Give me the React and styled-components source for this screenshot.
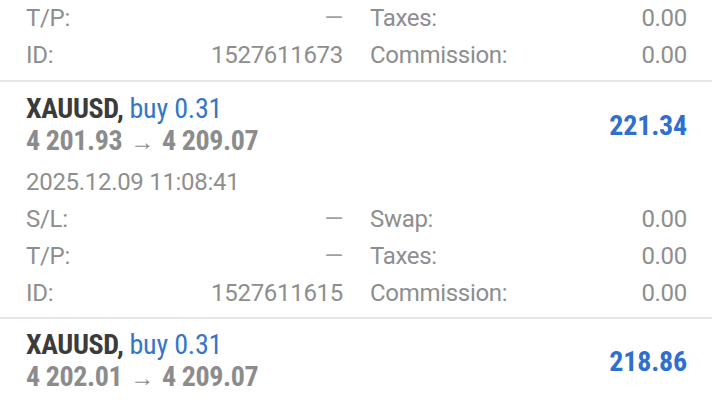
import styled, { createGlobalStyle } from 'styled-components'

const GlobalStyle = createGlobalStyle`
  html, body {
    margin: 0;
    padding: 0;
    background: #ffffff;
    overflow: hidden;
  }
  body {
    font-family: Roboto, 'Noto Sans', sans-serif;
  }
`

const Page = styled.div`
  width: 712px;
  height: 400px;
  overflow: hidden;
  background: #ffffff;
`

const Card = styled.div`
  padding: ${({ top }) => top || 0}px 25px ${({ bottom }) => bottom ?? 6}px 26px;
  border-bottom: 2px solid #e6e6e6;
`

const Header = styled.div`
  display: flex;
  align-items: center;
  justify-content: space-between;
`

const TitleBlock = styled.div`
  display: flex;
  flex-direction: column;
`

const Title = styled.div`
  font-size: 28px;
  line-height: 33px;
  font-weight: 700;
  font-stretch: 80%;
  color: #3b3b3b;
  letter-spacing: -0.4px;
  white-space: nowrap;
`

const Side = styled.span`
  font-weight: 400;
  color: #3577c6;
  letter-spacing: -0.2px;
`

const Prices = styled.div`
  font-size: 28px;
  line-height: 32px;
  font-weight: 700;
  font-stretch: 80%;
  color: #8c8c8c;
  letter-spacing: -0.4px;
  white-space: nowrap;
`

const Arrow = styled.span`
  font-weight: 400;
  font-size: 24px;
  margin: 0 8px;
`

const Profit = styled.div`
  font-size: 28px;
  font-weight: 700;
  font-stretch: 80%;
  color: #2f6fce;
  letter-spacing: -0.2px;
`

const Time = styled.div`
  font-size: 24px;
  line-height: 37px;
  letter-spacing: -0.3px;
  color: #8f8f8f;
  margin-top: 6px;
`

const Grid = styled.div`
  display: grid;
  grid-template-columns: 1fr 1fr;
  column-gap: 27px;
`

const Field = styled.div`
  display: flex;
  justify-content: space-between;
  height: 37px;
  line-height: 37px;
  font-size: 24px;
  letter-spacing: -0.3px;
  color: #8e8e8e;
`

const Dash = styled.span`
  color: #a0a0a0;
`

function Value({ v }) {
  return v === '—' ? <Dash>—</Dash> : <span>{v}</span>
}

function Fields({ rows }) {
  return (
    <Grid>
      {rows.map(([l1, v1, l2, v2]) => [
        <Field key={l1}>
          <span>{l1}</span>
          <Value v={v1} />
        </Field>,
        <Field key={l2}>
          <span>{l2}</span>
          <Value v={v2} />
        </Field>
      ])}
    </Grid>
  )
}

function Deal({ side, open, close, profit }) {
  return (
    <Header>
      <TitleBlock>
        <Title>
          XAUUSD, <Side>{side}</Side>
        </Title>
        <Prices>
          {open}
          <Arrow>→</Arrow>
          {close}
        </Prices>
      </TitleBlock>
      <Profit>{profit}</Profit>
    </Header>
  )
}

export default function App() {
  return (
    <Page>
      <GlobalStyle />
      <Card>
        <Fields
          rows={[
            ['T/P:', '—', 'Taxes:', '0.00'],
            ['ID:', '1527611673', 'Commission:', '0.00']
          ]}
        />
      </Card>
      <Card top={10} bottom={5}>
        <Deal side="buy 0.31" open="4 201.93" close="4 209.07" profit="221.34" />
        <Time>2025.12.09 11:08:41</Time>
        <Fields
          rows={[
            ['S/L:', '—', 'Swap:', '0.00'],
            ['T/P:', '—', 'Taxes:', '0.00'],
            ['ID:', '1527611615', 'Commission:', '0.00']
          ]}
        />
      </Card>
      <Card top={9}>
        <Deal side="buy 0.31" open="4 202.01" close="4 209.07" profit="218.86" />
      </Card>
    </Page>
  )
}
